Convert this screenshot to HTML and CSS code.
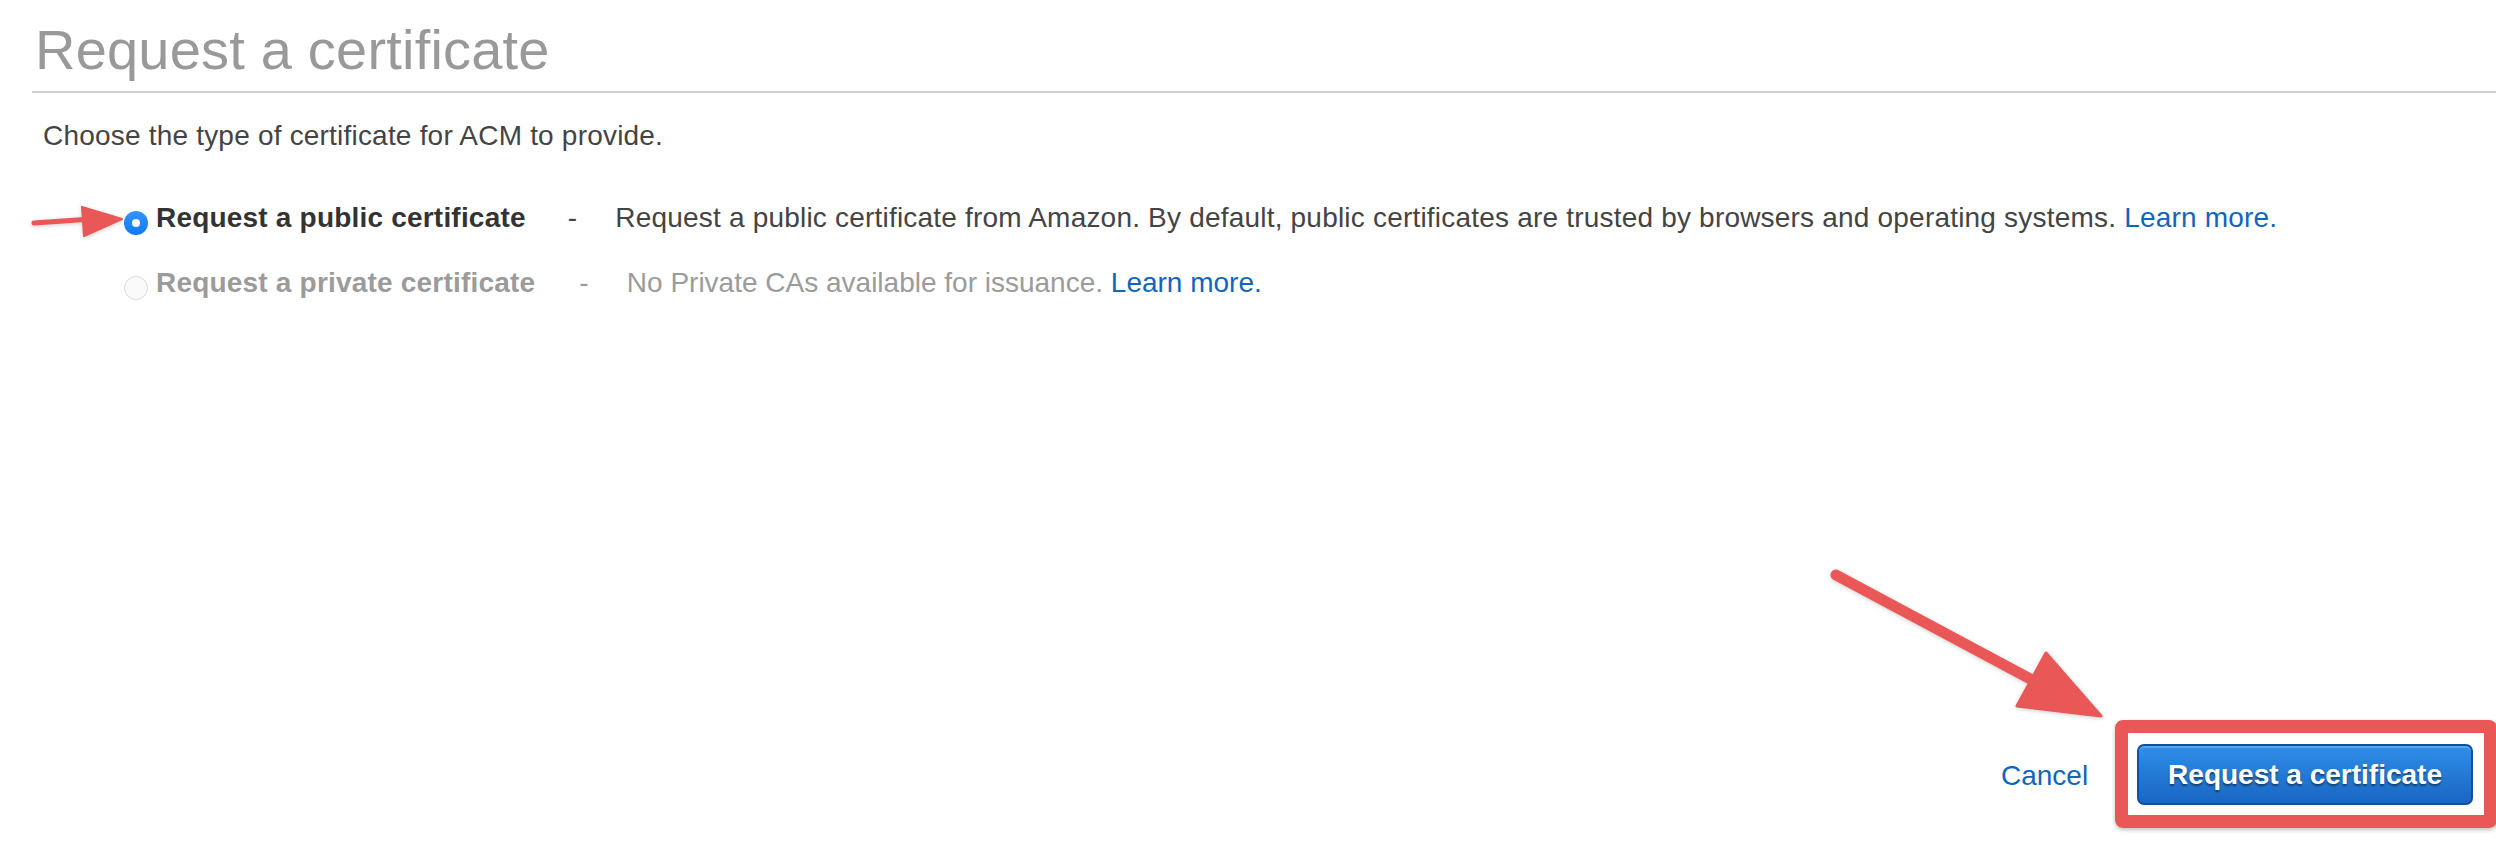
FILE: index.html
```html
<!DOCTYPE html>
<html lang="en">
	<head>
		<title>Request a certificate</title>
		<link rel="stylesheet" href="styles.css">
	</head>
	<body>
		<div class="page">
			<h1 class="title">Request a certificate</h1>
			<p class="intro">Choose the type of certificate for ACM to provide.</p>
			<div class="options">
				<label class="option">
					<input type="radio" class="radio" name="type" checked>
					<span class="name">Request a public certificate</span>
					<span class="dash">-</span>
					<span class="desc">Request a public certificate from Amazon. By default, public certificates are trusted by browsers and operating systems. <a href="#">Learn more.</a></span>
				</label>
				<label class="option disabled">
					<input type="radio" class="radio" name="type" disabled>
					<span class="name">Request a private certificate</span>
					<span class="dash">-</span>
					<span class="desc">No Private CAs available for issuance. <a href="#">Learn more.</a></span>
				</label>
			</div>
		</div>
		<div class="actions">
			<a href="#" class="cancel">Cancel</a>
			<span class="callout">
				<button type="button" class="primary">Request a certificate</button>
			</span>
		</div>
		<svg class="marks" width="2496" height="842" viewBox="0 0 2496 842">
			<g fill="#e95757" stroke="#e95757" stroke-linejoin="round" stroke-linecap="round">
				<line x1="34" y1="223" x2="92" y2="219" stroke-width="5"/>
				<polygon points="82,207 122,219 84,236" stroke-width="2"/>
				<line x1="1836" y1="575" x2="2036" y2="682" stroke-width="11"/>
				<polygon points="2046,653 2101,716 2017,706" stroke-width="3"/>
			</g>
		</svg>
	</body>
</html>
```

FILE: styles.css
```css
body {
	margin: 0;
	font-family: "Liberation Sans", Arial, sans-serif;
	color: #444;
	background: #fff;
	position: relative;
	min-height: 842px;
}
a {
	color: #1166bb;
	text-decoration: none;
}
.page {
	padding: 18px 0 0 32px;
}
.title {
	margin: 0;
	padding: 0 0 9px 3px;
	border-bottom: 2px solid #cfcfcf;
	font-size: 56px;
	line-height: 64px;
	font-weight: normal;
	letter-spacing: 0.2px;
	color: #999;
}
.intro {
	margin: 23px 0 0 11px;
	font-size: 28px;
	line-height: 40px;
	letter-spacing: 0.2px;
}
.options {
	margin-top: 42px;
	padding-left: 92px;
	display: flex;
	flex-direction: column;
	gap: 25px;
}
.option {
	display: flex;
	align-items: center;
	height: 40px;
	font-size: 28px;
	line-height: 40px;
	letter-spacing: 0.2px;
	white-space: nowrap;
}
.radio {
	appearance: none;
	-webkit-appearance: none;
	margin: 10px 8px 0 0;
	width: 24px;
	height: 24px;
	border-radius: 50%;
	background: linear-gradient(#3494ff, #1179f8);
	flex: none;
	position: relative;
}
.radio:checked::after {
	content: "";
	position: absolute;
	left: 8px;
	top: 8px;
	width: 8px;
	height: 8px;
	border-radius: 50%;
	background: #fff;
}
.radio:disabled {
	background: #fafafa;
	border: 1px solid #dadada;
	box-sizing: border-box;
}
.name {
	font-weight: bold;
	color: #333;
}
.dash {
	margin: 0 38px 0 42px;
}
.disabled .name,
.disabled .dash,
.disabled .desc {
	color: #9b9b9b;
}
.disabled .dash {
	margin: 0 38px 0 44px;
}
.disabled .desc {
	letter-spacing: 0;
}
.actions {
	margin-top: 441px;
	padding-right: 23px;
	display: flex;
	justify-content: flex-end;
	align-items: center;
	gap: 49px;
}
.cancel {
	font-size: 28px;
	line-height: 40px;
	margin-top: 2px;
}
.callout {
	position: relative;
	display: block;
}
.callout::after {
	content: "";
	position: absolute;
	top: -24px;
	left: -22px;
	right: -24px;
	bottom: -23px;
	border: 13px solid #e95757;
	border-radius: 8px;
	box-shadow: 0 2px 4px rgba(0, 0, 0, 0.25);
}
.primary {
	display: block;
	box-sizing: border-box;
	height: 61px;
	padding: 0 29px;
	border: 2px solid #0f519f;
	border-radius: 7px;
	background: linear-gradient(#2f8ee9, #1966c2);
	box-shadow: inset 0 2px 0 rgba(255, 255, 255, 0.2);
	color: #fff;
	font-family: "Liberation Sans", Arial, sans-serif;
	font-size: 28px;
	font-weight: bold;
	text-shadow: 0 2px 2px rgba(0, 0, 0, 0.45);
}
.marks {
	position: absolute;
	top: 0;
	left: 0;
	pointer-events: none;
	filter: drop-shadow(0 1px 2px rgba(0, 0, 0, 0.2));
}
```
